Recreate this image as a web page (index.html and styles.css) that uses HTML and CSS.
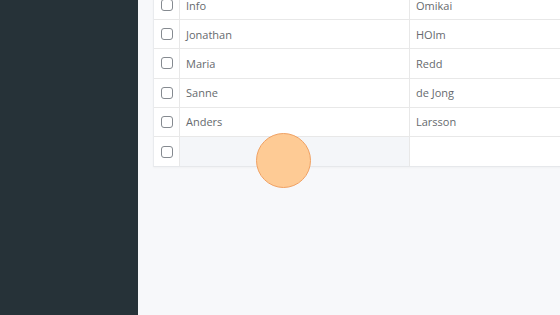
FILE: index.html
```html
<!DOCTYPE html>
<html>
<head>
<meta charset="utf-8">
<link rel="stylesheet" href="styles.css">
</head>
<body>
<div class="app">
  <aside class="sidebar"></aside>
  <main class="main">
    <div class="card">
      <div class="row">
        <div class="cell check"><span class="box"></span></div>
        <div class="cell">Info</div>
        <div class="cell">Omikai</div>
      </div>
      <div class="row">
        <div class="cell check"><span class="box"></span></div>
        <div class="cell">Jonathan</div>
        <div class="cell">HOlm</div>
      </div>
      <div class="row">
        <div class="cell check"><span class="box"></span></div>
        <div class="cell">Maria</div>
        <div class="cell">Redd</div>
      </div>
      <div class="row">
        <div class="cell check"><span class="box"></span></div>
        <div class="cell">Sanne</div>
        <div class="cell">de Jong</div>
      </div>
      <div class="row">
        <div class="cell check"><span class="box"></span></div>
        <div class="cell">Anders</div>
        <div class="cell">Larsson</div>
      </div>
      <div class="row last">
        <div class="cell check"><span class="box"></span></div>
        <div class="cell hover"></div>
        <div class="cell"></div>
        <span class="cursor"></span>
      </div>
    </div>
  </main>
</div>
</body>
</html>
```
FILE: styles.css
```css
html, body {
  margin: 0;
  padding: 0;
  width: 560px;
  height: 315px;
  overflow: hidden;
}
body {
  font-family: "Open Sans", "Liberation Sans", sans-serif;
  font-size: 11px;
  color: #666a6e;
}
.app {
  display: flex;
  height: 315px;
}
.sidebar {
  width: 138px;
  flex: none;
  background: #263238;
}
.main {
  flex: 1;
  background: #f7f8fa;
  padding-left: 15px;
  overflow: hidden;
}
.card {
  margin-top: -9px;
  width: 460px;
  background: #fff;
  border-left: 1px solid #e9ebee;
  border-bottom: 1px solid #e6e8eb;
  box-shadow: 0 1px 2px rgba(0,0,0,0.03);
}
.row {
  position: relative;
  display: grid;
  grid-template-columns: 26px 230px 1fr;
  height: 29.2px;
  box-sizing: border-box;
  border-bottom: 1px solid #e8e8e8;
}
.row.last {
  border-bottom: none;
}
.cell {
  display: flex;
  align-items: center;
  padding-left: 6px;
  border-right: 1px solid #e8e8e8;
  white-space: nowrap;
}
.cell:last-child {
  border-right: none;
}
.cell.check {
  padding-left: 7px;
}
.cell.hover {
  background: #f4f6f9;
}
.box {
  width: 12px;
  height: 12px;
  box-sizing: border-box;
  border: 1px solid #858a90;
  border-radius: 3px;
  background: #fff;
}
.cursor {
  position: absolute;
  left: 102px;
  top: -4px;
  width: 55px;
  height: 55px;
  box-sizing: border-box;
  border-radius: 50%;
  background: #fecb95;
  border: 1.5px solid #f0a163;
}
```
